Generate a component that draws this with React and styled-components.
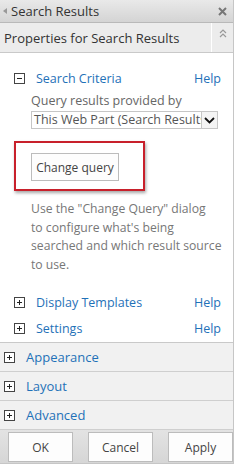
import styled, { createGlobalStyle } from "styled-components";

const Global = createGlobalStyle`
  body {
    margin: 0;
    background: #fff;
    font-family: "Open Sans", "Noto Sans", sans-serif;
  }
`;

const Pane = styled.div`
  width: 234px;
  height: 464px;
  display: flex;
  flex-direction: column;
  border-right: 1px solid #c6c6c6;
  border-bottom: 1px solid #c6c6c6;
  box-sizing: border-box;
`;

const TitleBar = styled.div`
  height: 22px;
  display: flex;
  align-items: center;
  padding: 0 6px 0 3px;
  background: linear-gradient(#e9e9e9, #d4d4d4);
  border-bottom: 1px solid #b9b9b9;
  font-size: 13px;
  color: #333;
`;

const Title = styled.span`
  flex: 1;
  margin-left: 4px;
`;

const Arrow = styled.span`
  width: 0;
  height: 0;
  border-top: 3px solid transparent;
  border-bottom: 3px solid transparent;
  border-right: 4px solid #999;
`;

const Header = styled.div`
  height: 29px;
  display: flex;
  align-items: stretch;
  background: #ececec;
  border-bottom: 1px solid #c9c9c9;
  font-size: 13px;
  color: #333;
`;

const HeaderText = styled.div`
  flex: 1;
  display: flex;
  align-items: center;
  padding-left: 4px;
`;

const Collapse = styled.div`
  width: 22px;
  display: flex;
  justify-content: center;
  padding-top: 6px;
  border-left: 1px solid #fff;
  box-sizing: border-box;
`;

const Body = styled.div`
  padding: 13px 12px 0 14px;
  height: 290px;
  box-sizing: border-box;
  background: #fff;
  border-bottom: 1px solid #c9c9c9;
`;

const SectionRow = styled.div`
  display: flex;
  align-items: center;
  height: ${(p) => p.h || 24}px;
  font-size: 12.5px;
`;

const Box = styled.span`
  width: 9px;
  height: 9px;
  border: 1px solid #444;
  background: #fff;
  position: relative;
  margin-right: 11px;
  flex-shrink: 0;
  &::before {
    content: "";
    position: absolute;
    left: 2px;
    top: 4px;
    width: 5px;
    height: 1px;
    background: #222;
  }
  &::after {
    content: "";
    display: ${(p) => (p.plus ? "block" : "none")};
    position: absolute;
    left: 4px;
    top: 2px;
    width: 1px;
    height: 5px;
    background: #222;
  }
`;

const Link = styled.span`
  color: #1f71b8;
  flex: 1;
`;

const Help = styled.span`
  color: #1f71b8;
`;

const Inner = styled.div`
  padding-left: 17px;
  font-size: 12.5px;
  color: #666;
`;

const Label = styled.div`
  margin-top: 2px;
  height: 17px;
`;

const Select = styled.div`
  display: flex;
  height: 18px;
  width: 187px;
  border: 1px solid #c6c6c6;
  box-sizing: border-box;
  color: #555;
  font-size: 12.5px;
  margin-top: 2px;
`;

const SelectText = styled.div`
  flex: 1;
  overflow: hidden;
  white-space: nowrap;
  padding-left: 2px;
  line-height: 16px;
`;

const SelectBtn = styled.div`
  width: 15px;
  border-left: 1px solid #c6c6c6;
  background: #f4f4f4;
  display: flex;
  align-items: center;
  justify-content: center;
`;

const Highlight = styled.div`
  margin: 12px 0 0 -17px;
  width: 131px;
  height: 50px;
  border: 2px solid #c8202b;
  box-sizing: border-box;
  box-shadow: 1px 2px 3px rgba(0, 0, 0, 0.35);
  padding: 10px 0 0 15px;
`;

const Button = styled.div`
  width: ${(p) => p.w || 65}px;
  height: ${(p) => p.hgt || 30}px;
  border: 1px solid #bcbcbc;
  background: #fdfdfd;
  display: flex;
  align-items: center;
  justify-content: center;
  box-sizing: border-box;
  font-size: 12px;
  color: #444;
`;

const Desc = styled.div`
  margin-top: 9px;
  line-height: 18.7px;
  font-size: 12.2px;
  color: #777;
  white-space: nowrap;
  margin-bottom: 15px;
`;

const Group = styled.div`
  height: 28px;
  display: flex;
  align-items: center;
  padding-left: 4px;
  background: #f1f1f1;
  border-bottom: 1px solid #cfcfcf;
  font-size: 13px;
`;

const Footer = styled.div`
  flex: 1;
  display: flex;
  justify-content: space-between;
  padding: 2px 0 0 8px;
  background: linear-gradient(#e3e3e3, #d6d6d6);
`;

const Chevrons = () => (
  <svg width="8" height="10" viewBox="0 0 8 10">
    <path d="M1 4 L4 1 L7 4 M1 8 L4 5 L7 8" fill="none" stroke="#999" strokeWidth="1.2" />
  </svg>
);

const Close = () => (
  <svg width="9" height="9" viewBox="0 0 9 9">
    <path d="M1 1 L8 8 M8 1 L1 8" stroke="#777" strokeWidth="2" />
  </svg>
);

const Caret = () => (
  <svg width="11" height="7" viewBox="0 0 11 7">
    <path d="M1 1 L5.5 5.5 L10 1" fill="none" stroke="#111" strokeWidth="1.8" />
  </svg>
);

export default function App() {
  return (
    <>
      <Global />
      <Pane>
        <TitleBar>
          <Arrow />
          <Title>Search Results</Title>
          <Close />
        </TitleBar>
        <Header>
          <HeaderText>Properties for Search Results</HeaderText>
          <Collapse>
            <Chevrons />
          </Collapse>
        </Header>
        <Body>
          <SectionRow>
            <Box />
            <Link>Search Criteria</Link>
            <Help>Help</Help>
          </SectionRow>
          <Inner>
            <Label>Query results provided by</Label>
            <Select>
              <SelectText>This Web Part (Search Results)</SelectText>
              <SelectBtn>
                <Caret />
              </SelectBtn>
            </Select>
            <Highlight>
              <Button w={88} hgt={28}>Change query</Button>
            </Highlight>
            <Desc>
              Use the "Change Query" dialog
              <br />
              to configure what's being
              <br />
              searched and which result source
              <br />
              to use.
            </Desc>
          </Inner>
          <SectionRow h={26}>
            <Box plus />
            <Link>Display Templates</Link>
            <Help>Help</Help>
          </SectionRow>
          <SectionRow h={26}>
            <Box plus />
            <Link>Settings</Link>
            <Help>Help</Help>
          </SectionRow>
        </Body>
        <Group>
          <Box plus />
          <Link>Appearance</Link>
        </Group>
        <Group>
          <Box plus />
          <Link>Layout</Link>
        </Group>
        <Group>
          <Box plus />
          <Link>Advanced</Link>
        </Group>
        <Footer>
          <Button>OK</Button>
          <Button>Cancel</Button>
          <Button>Apply</Button>
        </Footer>
      </Pane>
    </>
  );
}
